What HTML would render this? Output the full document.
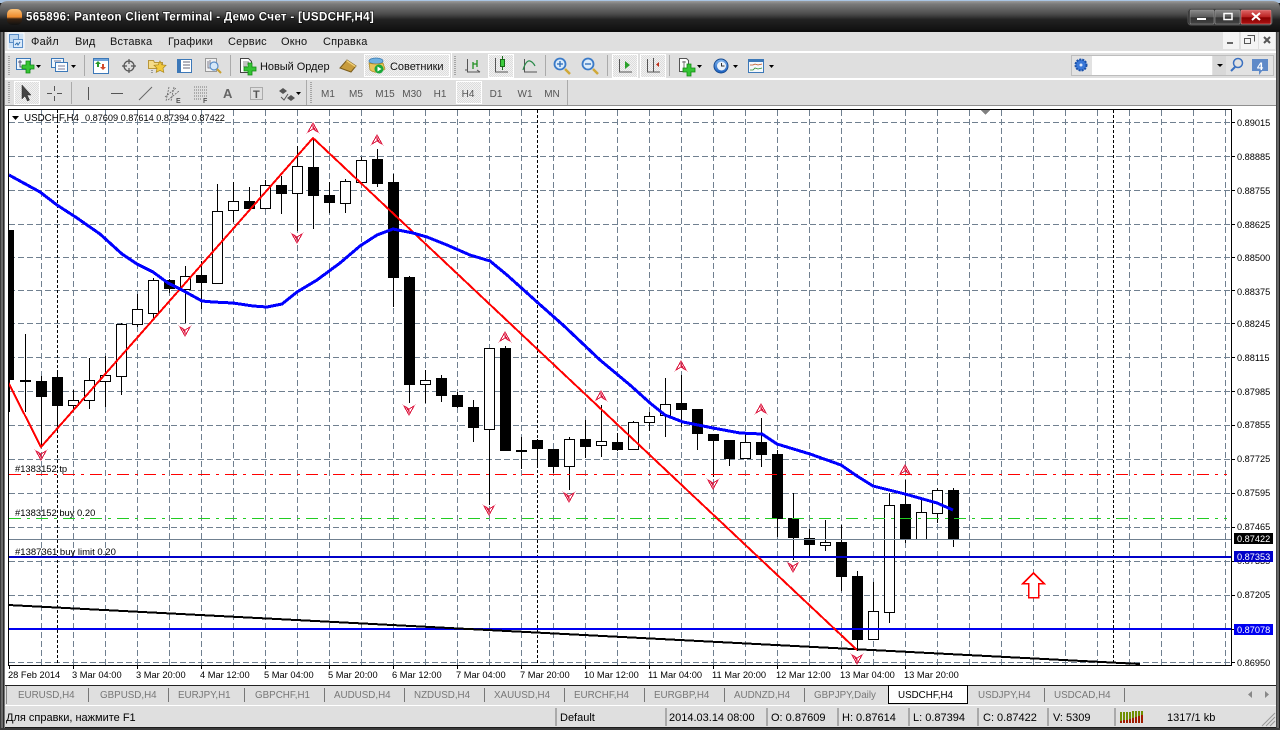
<!DOCTYPE html>
<html><head><meta charset="utf-8"><title>Panteon Client Terminal</title>
<style>
html,body{margin:0;padding:0;background:#1a1a1a;width:1280px;height:730px;overflow:hidden}
svg{display:block;position:absolute;left:0;top:0}
text{font-family:"Liberation Sans","Noto Sans CJK SC",sans-serif}
</style></head><body>
<svg xmlns="http://www.w3.org/2000/svg" width="1280" height="730" viewBox="0 0 1280 730">
<defs>
<linearGradient id="tb" x1="0" y1="0" x2="0" y2="1"><stop offset="0" stop-color="#9a9a9a"/><stop offset=".1" stop-color="#7a7a7a"/><stop offset=".42" stop-color="#4c4c4c"/><stop offset=".6" stop-color="#222"/><stop offset="1" stop-color="#0e0e0e"/></linearGradient>
<linearGradient id="ti" x1="0" y1="0" x2="0" y2="1"><stop offset="0" stop-color="#fbc27a"/><stop offset=".5" stop-color="#ee8a2c"/><stop offset=".62" stop-color="#3a2412"/><stop offset="1" stop-color="#111"/></linearGradient>
<linearGradient id="bmin" x1="0" y1="0" x2="0" y2="1"><stop offset="0" stop-color="#8a8a8a"/><stop offset=".5" stop-color="#5a5a5a"/><stop offset=".55" stop-color="#333"/><stop offset="1" stop-color="#444"/></linearGradient>
<linearGradient id="bcl" x1="0" y1="0" x2="0" y2="1"><stop offset="0" stop-color="#d66"/><stop offset=".5" stop-color="#b22"/><stop offset=".55" stop-color="#800"/><stop offset="1" stop-color="#a11"/></linearGradient>
<linearGradient id="blueb" x1="0" y1="0" x2="0" y2="1"><stop offset="0" stop-color="#7fb4ee"/><stop offset="1" stop-color="#1a5fc0"/></linearGradient>
<pattern id="chk" width="2" height="2" patternUnits="userSpaceOnUse"><rect width="2" height="2" fill="#f2f2f2"/><rect width="1" height="1" fill="#dcdcdc"/><rect x="1" y="1" width="1" height="1" fill="#dcdcdc"/></pattern>
<g id="plus"><path d="M-2 -6h4v4h4v4h-4v4h-4v-4h-4v-4h4z" fill="#35c435" stroke="#128a12" stroke-width=".8"/></g>
<g id="up" shape-rendering="crispEdges"><path d="M0 -5L-5 4L0 1L5 4Z" fill="none" stroke="#dc143c"/><path d="M0 -2L0 1L3 3Z" fill="#dc143c" stroke="#dc143c" stroke-width=".8"/></g>
<g id="dn" shape-rendering="crispEdges"><path d="M0 5L-5 -4L0 -1L5 -4Z" fill="none" stroke="#dc143c"/><path d="M0 2L0 -1L-3 -3Z" fill="#dc143c" stroke="#dc143c" stroke-width=".8"/></g>
</defs>

<!-- window frame -->
<rect x="0" y="0" width="1280" height="730" fill="#1c1c1c"/>
<rect x="0" y="0" width="1280" height="3" fill="#a9c4e2"/>
<path d="M0 8Q0 1 8 1H1272Q1280 1 1280 8V32H0Z" fill="url(#tb)"/>
<rect x="0" y="30" width="1280" height="2" fill="#0b0b0b"/>
<g shape-rendering="crispEdges">
<rect x="0" y="32" width="1" height="698" fill="#3a3a3a"/><rect x="1" y="32" width="2" height="698" fill="#6a6a6a"/><rect x="3" y="32" width="1" height="698" fill="#2a2a2a"/><rect x="4" y="32" width="1" height="698" fill="#777"/>
<rect x="1276" y="32" width="1" height="698" fill="#444"/><rect x="1277" y="32" width="2" height="698" fill="#666"/>
<rect x="0" y="728" width="1280" height="2" fill="#3a3a3a"/>
</g>
<!-- title -->
<rect x="7" y="9" width="15" height="16" rx="5" fill="url(#ti)"/>
<text x="26" y="20.5" font-size="11.5" font-weight="bold" fill="#fff" letter-spacing=".34" style="paint-order:stroke" stroke="#000" stroke-opacity=".55" stroke-width="1.6">565896: Panteon Client Terminal - Демо Счет - [USDCHF,H4]</text>
<!-- window controls -->
<rect x="1188" y="9" width="84" height="16" rx="3" fill="#222" stroke="#555"/>
<rect x="1190" y="10" width="24" height="14" rx="1" fill="url(#bmin)" stroke="#999" stroke-width=".6"/>
<rect x="1215" y="10" width="25" height="14" rx="1" fill="url(#bmin)" stroke="#999" stroke-width=".6"/>
<rect x="1241" y="10" width="30" height="14" rx="1" fill="url(#bcl)" stroke="#d99" stroke-width=".6"/>
<rect x="1197" y="18" width="9" height="2" fill="#fff"/>
<rect x="1224" y="13.5" width="8" height="6" fill="none" stroke="#fff" stroke-width="1.5"/>
<path d="M1252 13l8 7M1260 13l-8 7" stroke="#fff" stroke-width="2"/>

<!-- toolbars background -->
<g shape-rendering="crispEdges">
<rect x="5" y="32" width="1271" height="75" fill="#dfdfdf"/>
<rect x="5" y="51" width="1271" height="2" fill="#fff"/>
<rect x="5" y="78" width="1271" height="2" fill="#fff"/>
<rect x="5" y="105" width="1271" height="1" fill="#8f8f8f"/>
<rect x="5" y="106" width="1271" height="579" fill="#fff"/>
</g>
<!-- menu -->
<rect x="8" y="33" width="16" height="16" fill="#cfe2f5" stroke="#fff"/>
<rect x="9.5" y="34.5" width="9" height="8" fill="#bcd6f0" stroke="#5a8ec8"/>
<rect x="13.5" y="39.5" width="9" height="8" fill="#dcebfa" stroke="#5a8ec8"/>
<path d="M15 45l2-2 1 2 2-3" stroke="#3070b0" fill="none"/>
<g font-size="11" fill="#111" letter-spacing=".2">
<text x="31" y="45">Файл</text><text x="75" y="45">Вид</text><text x="110" y="45">Вставка</text><text x="168" y="45">Графики</text><text x="228" y="45">Сервис</text><text x="281" y="45">Окно</text><text x="323" y="45">Справка</text>
</g>
<!-- MDI controls -->
<g shape-rendering="crispEdges">
<rect x="1223" y="32" width="16" height="17" fill="#f4f4f4"/><rect x="1241" y="32" width="17" height="17" fill="#f4f4f4"/><rect x="1259" y="32" width="16" height="17" fill="#f4f4f4"/>
<rect x="1227" y="42" width="6" height="2" fill="#666"/>
<path d="M1247.5 35.500h7v6M1244.500 38.500h6v5h-6z" fill="none" stroke="#555"/>
</g>
<path d="M1264 37l6 6M1270 37l-6 6" stroke="#555" stroke-width="2"/>

<!-- handles -->
<g stroke="#a5a5a5" stroke-width="2" stroke-dasharray="1 1" fill="none" shape-rendering="crispEdges">
<path d="M9 56V76M9 82V103M311 82V103M455 56V76"/>
</g>
<!-- separators -->
<g stroke="#aaa" shape-rendering="crispEdges">
<path d="M84.500 55V76M230.500 55V76M545.500 55V76M607.500 55V76M669.500 55V76M71.500 82V104M306.500 80V105M567.500 80V105"/>
<path d="M451.500 53V78" stroke="#fff"/>
</g>

<!-- row1 icons -->
<g><!-- new chart -->
<rect x="16.500" y="58.500" width="14" height="11" fill="#eef5fc" stroke="#3c78b8"/>
<path d="M20 60v7h7M18 62h4" stroke="#335" fill="none" stroke-width=".8"/>
<use href="#plus" x="28" y="67"/>
<path d="M36 65h5l-2.500 3z" fill="#000"/>
</g>
<g><!-- profiles -->
<rect x="51.500" y="58.500" width="12" height="9" fill="#eef5fc" stroke="#3c78b8"/>
<rect x="55.500" y="62.500" width="12" height="9" fill="#f8fbff" stroke="#3c78b8"/>
<path d="M54 61h7M58 66h7M58 69h7" stroke="#557" stroke-width=".8"/>
<path d="M71 65h5l-2.500 3z" fill="#000"/>
</g>
<g><!-- market watch -->
<rect x="93.500" y="58.500" width="15" height="15" fill="#fff" stroke="#3c78b8"/>
<rect x="94" y="59" width="14" height="2" fill="#6fa5dc"/>
<path d="M98 61l-3 3h2v3h2v-3h2z" fill="#2a9a2a"/><path d="M103 70l3-3h-2v-3h-2v3h-2z" fill="#d24a2a"/>
</g>
<g fill="none" stroke="#555"><!-- crosshair -->
<circle cx="129" cy="66" r="5" stroke-width="1.300"/><path d="M129 59v5M129 68v5M122 66h5M131 66h5" stroke-width="1.200"/>
</g>
<g><!-- folder star -->
<path d="M148.500 60.500h5l1 2h8v6h-14z" fill="#f5dc8a" stroke="#b8963a"/>
<path d="M160 61l1.800 3.800 4.200.5-3 2.900.8 4.200-3.800-2-3.800 2 .8-4.200-3-2.900 4.200-.5z" fill="#f2c93c" stroke="#a8861e" stroke-width=".7"/>
<path d="M152 70v4" stroke="#555" stroke-dasharray="1 1"/>
</g>
<g><!-- navigator -->
<rect x="177.500" y="59.500" width="14" height="13" fill="#fff" stroke="#3c78b8"/>
<rect x="178" y="60" width="3" height="12" fill="#3c78b8"/>
<path d="M183 62h7M183 65h7M183 68h7" stroke="#667" />
</g>
<g><!-- tester -->
<rect x="205.500" y="58.500" width="11" height="13" fill="#f0f0f0" stroke="#999"/>
<path d="M208 61v7h6M210 60v5" stroke="#667" stroke-width=".8" fill="none"/>
<circle cx="214" cy="66" r="4" fill="#d6e8f8" stroke="#5a8ec8" stroke-width="1.200"/>
<path d="M217 69l4 4" stroke="#c9a030" stroke-width="2"/>
</g>
<g><!-- new order -->
<path d="M240.500 58.500h8l3 3v11h-11z" fill="#fff" stroke="#444"/>
<path d="M243 62h6M243 64h6M243 66h4" stroke="#666" stroke-width=".8"/>
<use href="#plus" x="250" y="69"/>
</g>
<text x="260" y="70" font-size="11" fill="#111" letter-spacing="-.05">Новый Ордер</text>
<path d="M340 68l7-8 9 6-5 6z" fill="#c89c3c" stroke="#7a5c1c"/><path d="M347 60l9 6-1 1-9-6z" fill="#f2d27a"/>
<rect x="364.500" y="54.500" width="85" height="22" fill="url(#chk)" stroke="#fff"/>
<g>
<ellipse cx="376" cy="61" rx="7" ry="3" fill="#6fb0e0" stroke="#3a7ab0" stroke-width=".7"/>
<path d="M369 63q6 2 14 0l2 6q-8 6-15 1z" fill="#e8c35a" stroke="#a8861e" stroke-width=".7"/>
<circle cx="379" cy="69" r="4.500" fill="#1aa83a"/><path d="M377.500 66.500l4 2.500-4 2.500z" fill="#fff"/>
</g>
<text x="390" y="70" font-size="11" fill="#111" letter-spacing="-.03">Советники</text>
<g><!-- chart type icons -->
<g fill="none" stroke="#555"><path d="M467.500 59V72H480M465 70h2M477 70l3 2"/></g>
<path d="M473 69v-7M473 64h4M477 60v7" stroke="#1f8f1f" fill="none" stroke-width="1.300"/>
<rect x="488.500" y="54.500" width="25" height="23" fill="url(#chk)" stroke="#fff"/>
<path d="M495.500 58V72H508" stroke="#555" fill="none"/>
<path d="M502.500 56v14" stroke="#1a6a1a"/><rect x="500.500" y="59.500" width="4" height="7" fill="#3ccc3c" stroke="#1a6a1a"/>
<path d="M524.500 59V72H537" stroke="#555" fill="none"/>
<path d="M523 70q3-10 7-9 3 1 5 5" stroke="#2a8a4a" fill="none" stroke-width="1.200"/>
</g>
<g><!-- zoom -->
<circle cx="560" cy="64" r="5.500" fill="#dcecfa" stroke="#3a7ac8" stroke-width="1.800"/><path d="M557 64h6M560 61v6" stroke="#2a6ab8" stroke-width="1.300"/><path d="M565 69l5 5" stroke="#d0a838" stroke-width="2.500"/>
<circle cx="588" cy="64" r="5.500" fill="#dcecfa" stroke="#3a7ac8" stroke-width="1.800"/><path d="M585 64h6" stroke="#2a6ab8" stroke-width="1.300"/><path d="M593 69l5 5" stroke="#d0a838" stroke-width="2.500"/>
</g>
<g>
<rect x="612.500" y="54.500" width="25" height="23" fill="url(#chk)" stroke="#fff"/>
<path d="M619.500 59V72H632" stroke="#555" fill="none"/><path d="M625 61l5 4-5 4z" fill="#2aa02a"/>
<rect x="640.500" y="54.500" width="25" height="23" fill="url(#chk)" stroke="#fff"/>
<path d="M647.500 59V72H660M653.500 58V72" stroke="#555" fill="none"/><path d="M659 62v5l-3-2.500z" fill="#c0301a"/>
</g>
<g>
<path d="M679.500 58.500h7l2 2v11h-9z" fill="#fff" stroke="#555"/>
<path d="M682 62h4M684 61v7" stroke="#555" stroke-width=".8"/>
<use href="#plus" x="689" y="70"/>
<path d="M697 65h5l-2.500 3z" fill="#000"/>
<circle cx="721" cy="66" r="7" fill="url(#blueb)" stroke="#154a90"/><circle cx="721.500" cy="66" r="4.500" fill="#eaf2fa"/><path d="M721.500 63v3h3" stroke="#333" fill="none"/>
<path d="M733 65h5l-2.500 3z" fill="#000"/>
<rect x="748.500" y="59.500" width="15" height="13" fill="#f4f8fc" stroke="#3c78b8"/><rect x="749" y="60" width="14" height="2" fill="#3c78b8"/>
<path d="M750 65h3l2-1 3 1 4-1" stroke="#c0501a" fill="none" stroke-width=".8"/><path d="M750 70h3l2-2 3 1 4-1" stroke="#2a8a2a" fill="none" stroke-width=".8"/>
<path d="M769 65h5l-2.500 3z" fill="#000"/>
</g>
<!-- search -->
<g shape-rendering="crispEdges"><rect x="1071.500" y="55.500" width="202" height="20" fill="#e2e2e2" stroke="#bdbdbd"/><rect x="1092" y="56" width="120" height="19" fill="#fff"/><rect x="1213" y="56" width="13" height="19" fill="#d8d8d8"/></g>
<circle cx="1081" cy="65" r="5.500" fill="#3a78d8" stroke="#1a50a8" stroke-dasharray="2 1" stroke-width="2"/><circle cx="1081" cy="65" r="1.500" fill="#dce8fa"/>
<path d="M1217 64h6l-3 3z" fill="#000"/>
<circle cx="1238" cy="63" r="4.500" fill="none" stroke="#3a70c0" stroke-width="1.500"/><path d="M1235 67l-4 4" stroke="#3a70c0" stroke-width="2"/>
<path d="M1252 59h16v12h-6l-3 4v-4h-7z" fill="#5f8ac8"/><text x="1257" y="70" font-size="11" font-weight="bold" fill="#fff">4</text>

<!-- row2 -->
<rect x="14.500" y="81.500" width="25" height="23" fill="url(#chk)" stroke="#fff"/>
<path d="M22 85v14l3-3 2.500 5 2-1-2.500-5h4z" fill="#444" stroke="#222" stroke-width=".5"/>
<g stroke="#555" fill="none" shape-rendering="crispEdges">
<path d="M54.500 86v5M54.500 96v5M47 93.500h5M57 93.500h5"/>
<path d="M88.500 87v13M111 93.500h12"/>
</g>
<path d="M139 100l13-13" stroke="#666" fill="none"/>
<path d="M165 97l11-9M168 100l11-9M169 87l-3 14M174 87l-3 14" stroke="#666" fill="none" stroke-width=".8" stroke-dasharray="2 1"/>
<text x="176" y="103" font-size="7" font-weight="bold" fill="#555">E</text>
<path d="M194 87h13M194 90h13M194 93h13M194 96h13M194 99h8" stroke="#777" stroke-dasharray="1 1" fill="none"/>
<text x="203" y="103" font-size="7" font-weight="bold" fill="#555">F</text>
<text x="223" y="98" font-size="13" font-weight="bold" fill="#666">A</text>
<rect x="250.500" y="87.500" width="12" height="12" fill="none" stroke="#777" stroke-dasharray="1 1"/>
<text x="253" y="98" font-size="11" font-weight="bold" fill="#555">T</text>
<path d="M283 88l-4 3 4 3 4-3zM291 95l-4 3 4 3 4-3z" fill="#555"/><path d="M281 97l3 3 4-6" stroke="#555" fill="none"/>
<path d="M296 92h5l-2.500 3z" fill="#000"/>
<rect x="456.500" y="81.500" width="25" height="22" fill="url(#chk)" stroke="#fff"/>
<g font-size="10" fill="#555" text-anchor="middle">
<text x="328" y="97">M1</text><text x="356" y="97">M5</text><text x="385" y="97">M15</text><text x="412" y="97">M30</text><text x="440" y="97">H1</text><text x="468" y="97">H4</text><text x="496" y="97">D1</text><text x="525" y="97">W1</text><text x="552" y="97">MN</text>
</g>

<!-- CHART -->
<svg x="9" y="110" width="1222" height="555" viewBox="9 110 1222 555" shape-rendering="crispEdges">
<g fill="none" stroke="#708090" stroke-dasharray="6 3">
<path d="M9 122.500H1231M9 156.500H1231M9 190.500H1231M9 224.500H1231M9 257.500H1231M9 290.500H1231M9 323.500H1231M9 357.500H1231M9 391.500H1231M9 425.500H1231M9 459.500H1231M9 493.500H1231M9 527.500H1231M9 561.500H1231M9 595.500H1231M9 629.500H1231M9 662.500H1231"/>
<path d="M41.500 110V665M73.500 110V665M105.500 110V665M137.500 110V665M169.500 110V665M201.500 110V665M233.500 110V665M265.500 110V665M297.500 110V665M329.500 110V665M361.500 110V665M393.500 110V665M425.500 110V665M457.500 110V665M489.500 110V665M521.500 110V665M553.500 110V665M585.500 110V665M617.500 110V665M649.500 110V665M681.500 110V665M713.500 110V665M745.500 110V665M777.500 110V665M809.500 110V665M841.500 110V665M873.500 110V665M905.500 110V665M937.500 110V665M969.500 110V665M1001.500 110V665M1033.500 110V665M1065.500 110V665M1097.500 110V665M1129.500 110V665M1161.500 110V665M1193.500 110V665M1225.500 110V665"/>
</g>
<path d="M57.500 110V665M537.500 110V665M1113.500 110V665" stroke="#000" fill="none" stroke-dasharray="3 2"/>
<path d="M980 109h11l-5.500 6z" fill="#808080"/>
<!-- wicks -->
<path fill="none" stroke="#000" d="M9.500 230V412M25.500 334V412M41.500 376V447M57.500 370V430M73.500 390V410M89.500 358V409M105.500 356V407M121.500 323V395M137.500 294V327M153.500 278V318M169.500 279V293M185.500 266V323M201.500 261V309M217.500 184V283M233.500 182V222M249.500 187V210M265.500 180V208M281.500 176V214M297.500 146V231M313.500 138V229M329.500 182V213M345.500 179V213M361.500 157V182M377.500 149V187M393.500 174V307M409.500 276V403M425.500 370V403M441.500 375V402M457.500 392V408M473.500 400V442M489.500 348V505M505.500 346V451M521.500 437V469M537.500 439V467M553.500 449V473M569.500 437V490M585.500 420V458M601.500 405V457M617.500 433V451M633.500 421V450M649.500 412V431M665.500 378V437M681.500 375V427M697.500 409V450M713.500 434V477M729.500 440V466M745.500 433V459M761.500 418V467M777.500 450V537M793.500 493V560M809.500 529V557M825.500 520V551M841.500 525V591M857.500 571V651M873.500 582V640M889.500 493V623M905.500 480V543M921.500 497V540M937.500 488V523M953.500 488V547"/>
<!-- black bodies -->
<path fill="#000" d="M9 230h5v150h-5zM20 380h11v2h-11zM36 381h11v16h-11zM52 377h11v29h-11zM164 280h11v9h-11zM196 275h11v8h-11zM244 201h11v8h-11zM276 185h11v9h-11zM308 167h11v29h-11zM324 195h11v8h-11zM372 159h11v25h-11zM388 182h11v96h-11zM404 277h11v108h-11zM436 378h11v18h-11zM452 395h11v12h-11zM468 407h11v21h-11zM500 348h11v103h-11zM516 450h11v2h-11zM532 440h11v9h-11zM548 449h11v18h-11zM580 439h11v8h-11zM612 442h11v8h-11zM676 403h11v7h-11zM692 409h11v25h-11zM708 434h11v7h-11zM724 440h11v19h-11zM756 442h11v13h-11zM772 454h11v65h-11zM788 518h11v20h-11zM804 538h11v7h-11zM836 542h11v35h-11zM852 576h11v64h-11zM900 504h11v36h-11zM948 490h11v50h-11z"/>
<!-- white bodies -->
<path fill="#fff" stroke="#000" d="M68.500 400.500h10v5h-10zM84.500 380.500h10v20h-10zM100.500 375.500h10v6h-10zM116.500 324.500h10v52h-10zM132.500 309.500h10v15h-10zM148.500 280.500h10v33h-10zM180.500 276.500h10v13h-10zM212.500 211.500h10v72h-10zM228.500 201.500h10v9h-10zM260.500 185.500h10v23h-10zM292.500 166.500h10v27h-10zM340.500 181.500h10v22h-10zM356.500 160.500h10v22h-10zM420.500 380.500h10v4h-10zM484.500 348.500h10v81h-10zM564.500 439.500h10v27h-10zM596.500 441.500h10v4h-10zM628.500 422.500h10v27h-10zM644.500 416.500h10v6h-10zM660.500 404.500h10v11h-10zM740.500 442.500h10v16h-10zM820.500 542.500h10v3h-10zM868.500 611.500h10v28h-10zM884.500 505.500h10v107h-10zM916.500 512.500h10v27h-10zM932.500 490.500h10v23h-10z"/>
<!-- level lines -->
<path d="M9 474.500H1227" stroke="#f00" fill="none" stroke-dasharray="12 6 3 6"/>
<path d="M9 518.500H1227" stroke="#22cc22" fill="none" stroke-dasharray="12 6 3 6"/>
<path d="M9 539.500H1231" stroke="#708090" fill="none"/>
<rect x="9" y="556" width="1222" height="2" fill="#0000c8"/>
<rect x="9" y="628" width="1222" height="2" fill="#0000f0"/>
<!-- trend -->
<path d="M8 605L1140 664" stroke="#000" stroke-width="2" fill="none"/>
<!-- zigzag -->
<path d="M8 382L41 447L313 138L857 650" stroke="#f00" stroke-width="2" fill="none"/>
<!-- MA -->
<path d="M9 175L40 192L57 205L77 218L100 234L122 254L137 264L153 272L168 283L182 290L202 301L213 302L233 303L253 306L267 307L282 304L297 292L317 280L340 263L360 246L377 235L393 229L413 233L427 237L447 245L470 255L490 261L507 275L537 302L563 325L600 360L630 385L650 403L665 415L683 422L713 428L740 433L762 434L777 444L810 454L841 465L857 476L873 486L905 494L937 503L953 510" stroke="#0000ff" stroke-width="3" fill="none" stroke-linejoin="round"/>
<!-- arrows -->
<use href="#up" x="313" y="128"/><use href="#up" x="377" y="140"/><use href="#up" x="505" y="337"/><use href="#up" x="601" y="396"/><use href="#up" x="681" y="366"/><use href="#up" x="761" y="409"/><use href="#up" x="905" y="470"/>
<use href="#dn" x="41" y="455"/><use href="#dn" x="185" y="331"/><use href="#dn" x="297" y="238"/><use href="#dn" x="409" y="410"/><use href="#dn" x="489" y="510"/><use href="#dn" x="569" y="497"/><use href="#dn" x="713" y="484"/><use href="#dn" x="793" y="567"/><use href="#dn" x="857" y="659"/>
<path d="M1033.500 573L1044 583.500H1038.500V597.500H1028.500V583.500H1023Z" fill="#fff" stroke="#f00" stroke-width="1.500"/>
</svg>
<path d="M8.500 109.500H1231.500V665.500H8.500Z" fill="none" stroke="#000" shape-rendering="crispEdges"/>
<!-- chart header -->
<path d="M12 116h7l-3.500 4z" fill="#000"/>
<g font-size="9.200" fill="#000">
<text x="24" y="121" font-size="9.800">USDCHF,H4</text><text x="85" y="121" letter-spacing="-.02">0.87609 0.87614 0.87394 0.87422</text>
<text x="15" y="472" font-size="9.400">#1383152 tp</text><text x="15" y="516" font-size="9.400">#1383152 buy 0.20</text><text x="15" y="555" font-size="9.500">#1387361 buy limit 0.20</text>
</g>
<!-- price scale -->
<path stroke="#000" fill="none" shape-rendering="crispEdges" d="M1231 122.500h4M1231 156.500h4M1231 190.500h4M1231 224.500h4M1231 257.500h4M1231 290.500h4M1231 323.500h4M1231 357.500h4M1231 391.500h4M1231 425.500h4M1231 459.500h4M1231 493.500h4M1231 527.500h4M1231 561.500h4M1231 595.500h4M1231 629.500h4M1231 662.500h4"/>
<g font-size="9.200" fill="#000">
<text x="1237" y="126">0.89015</text><text x="1237" y="160">0.88885</text><text x="1237" y="194">0.88755</text><text x="1237" y="228">0.88625</text><text x="1237" y="261">0.88500</text><text x="1237" y="295">0.88375</text><text x="1237" y="327">0.88245</text><text x="1237" y="361">0.88115</text><text x="1237" y="395">0.87985</text><text x="1237" y="428">0.87855</text><text x="1237" y="462">0.87725</text><text x="1237" y="496">0.87595</text><text x="1237" y="530">0.87465</text><text x="1237" y="564">0.87335</text><text x="1237" y="598">0.87205</text><text x="1237" y="666">0.86950</text>
</g>
<g shape-rendering="crispEdges">
<rect x="1234" y="533" width="39" height="11" fill="#000"/><rect x="1234" y="551" width="39" height="11" fill="#0000c8"/><rect x="1234" y="624" width="39" height="11" fill="#0000f0"/>
</g>
<g font-size="9.200" fill="#fff"><text x="1237" y="542">0.87422</text><text x="1237" y="560">0.87353</text><text x="1237" y="633">0.87078</text></g>
<!-- time axis -->
<path stroke="#000" fill="none" shape-rendering="crispEdges" d="M9.500 665v4M73.500 665v4M137.500 665v4M201.500 665v4M265.500 665v4M329.500 665v4M393.500 665v4M457.500 665v4M521.500 665v4M585.500 665v4M649.500 665v4M713.500 665v4M777.500 665v4M841.500 665v4M905.500 665v4"/>
<g font-size="9.300" fill="#000">
<text x="8" y="678">28 Feb 2014</text><text x="72" y="678">3 Mar 04:00</text><text x="136" y="678">3 Mar 20:00</text><text x="200" y="678">4 Mar 12:00</text><text x="264" y="678">5 Mar 04:00</text><text x="328" y="678">5 Mar 20:00</text><text x="392" y="678">6 Mar 12:00</text><text x="456" y="678">7 Mar 04:00</text><text x="520" y="678">7 Mar 20:00</text><text x="584" y="678">10 Mar 12:00</text><text x="648" y="678">11 Mar 04:00</text><text x="712" y="678">11 Mar 20:00</text><text x="776" y="678">12 Mar 12:00</text><text x="840" y="678">13 Mar 04:00</text><text x="904" y="678">13 Mar 20:00</text>
</g>

<!-- tabs -->
<g shape-rendering="crispEdges">
<rect x="5" y="685" width="1271" height="21" fill="#dfdfdf"/>
<rect x="5" y="685" width="1271" height="1" fill="#222"/>
<rect x="5" y="705" width="1271" height="1" fill="#fff"/>
<rect x="888.500" y="685.500" width="79" height="18" fill="#fff" stroke="#000"/>
<path stroke="#777" fill="none" stroke-width="1" d="M88.500 688v14M168.500 688v14M244.500 688v14M324.500 688v14M404.500 688v14M484.500 688v14M564.500 688v14M644.500 688v14M724.500 688v14M804.500 688v14M1044.500 688v14M1124.500 688v14"/>
<rect x="6" y="686" width="1" height="18" fill="#888"/>
</g>
<g font-size="9.800" fill="#777">
<text x="18" y="698">EURUSD,H4</text><text x="100" y="698">GBPUSD,H4</text><text x="178" y="698">EURJPY,H1</text><text x="255" y="698">GBPCHF,H1</text><text x="334" y="698">AUDUSD,H4</text><text x="414" y="698">NZDUSD,H4</text><text x="494" y="698">XAUUSD,H4</text><text x="574" y="698">EURCHF,H4</text><text x="654" y="698">EURGBP,H4</text><text x="734" y="698">AUDNZD,H4</text><text x="814" y="698">GBPJPY,Daily</text><text x="978" y="698">USDJPY,H4</text><text x="1054" y="698">USDCAD,H4</text>
</g>
<text x="898" y="698" font-size="9.800" fill="#000">USDCHF,H4</text>
<path d="M1252 691v7l-4-3.500zM1265 691v7l4-3.500z" fill="#888"/>

<!-- status -->
<g shape-rendering="crispEdges">
<rect x="5" y="706" width="1271" height="21" fill="#dfdfdf"/>
<path stroke="#aaa" stroke-width="2" fill="none" d="M556 708v18M666 708v18M767 708v18M838 708v18M909 708v18M978 708v18M1048 708v18M1115 708v18"/>
</g>
<g font-size="11" fill="#000">
<text x="6" y="721">Для справки, нажмите F1</text><text x="560" y="721">Default</text><text x="669" y="721">2014.03.14 08:00</text><text x="771" y="721">O: 0.87609</text><text x="842" y="721">H: 0.87614</text><text x="913" y="721">L: 0.87394</text><text x="983" y="721">C: 0.87422</text><text x="1053" y="721">V: 5309</text><text x="1167" y="721">1317/1 kb</text>
</g>
<g shape-rendering="crispEdges">
<path fill="#6f8f00" d="M1120 712h2v11h-2zM1123 712h2v11h-2zM1126 712h2v11h-2zM1129 712h2v11h-2zM1132 711h2v12h-2zM1135 711h2v12h-2zM1138 711h2v12h-2zM1141 711h2v12h-2z"/>
<path fill="#a01c00" d="M1120 721h2v2h-2zM1123 720h2v3h-2zM1126 720h2v3h-2zM1129 719h2v4h-2zM1132 718h2v5h-2zM1135 717h2v6h-2zM1138 716h2v7h-2zM1141 715h2v8h-2z"/>
</g>
<path d="M1262 726l13-13M1266 726l9-9M1270 726l5-5" stroke="#999" fill="none"/>
</svg>
</body></html>
